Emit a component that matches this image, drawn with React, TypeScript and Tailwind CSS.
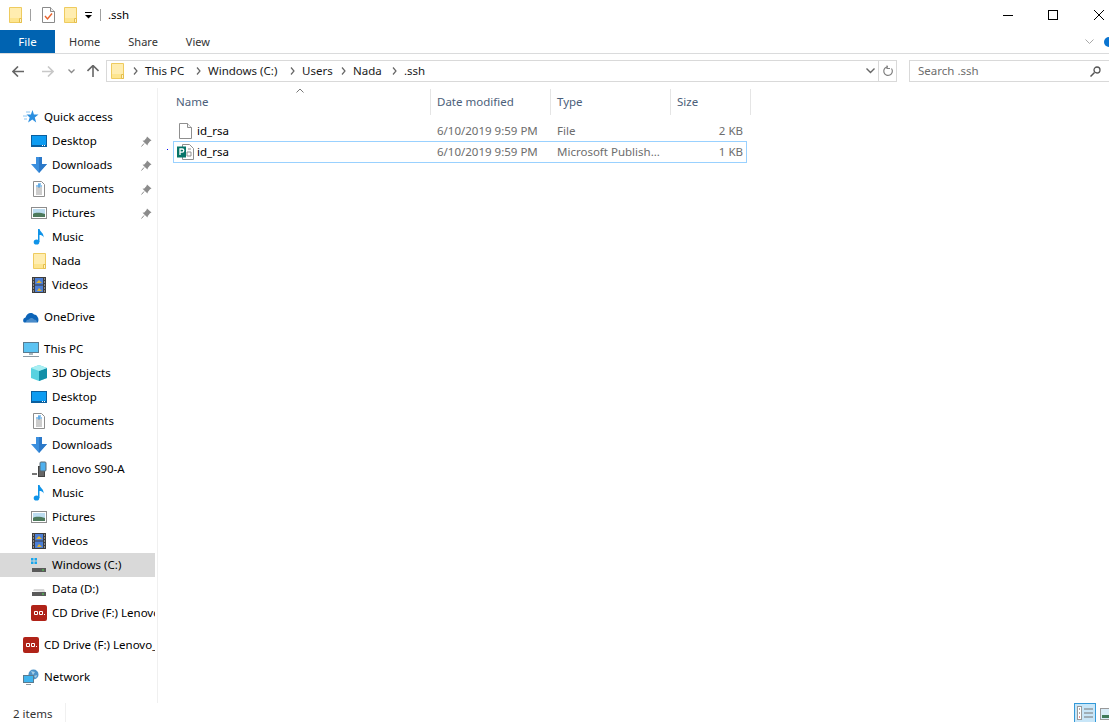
import React from "react";

function FolderIcon({ className = "w-[13px] h-4" }: { className?: string }) {
  return (
    <svg viewBox="0 0 13 16" className={className}>
      <path d="M.5.5h12v15H.5z" fill="#fde58f" stroke="#eecb5f" />
      <path d="M1 1h11v10H1z" fill="#ffedb0" />
      <path d="M10.500 11.500h2v4h-2z" fill="#fff3c8" stroke="#e5bf4d" />
    </svg>
  );
}

function PropertiesIcon() {
  return (
    <svg viewBox="0 0 13 16" className="w-[13px] h-4">
      <path d="M.5.5h8l4 4v11H.5z" fill="#fff" stroke="#8a8a8a" />
      <path d="M8.500.5v4h4" fill="#eee" stroke="#8a8a8a" />
      <path d="M3 9l2.500 3L10 6.500" fill="none" stroke="#e8622c" strokeWidth="1.400" />
    </svg>
  );
}

function QuickIcon() {
  return (
    <svg viewBox="0 0 16 16" className="w-4 h-4">
      <path d="M9.500 1l1.400 4.500H15.500l-3.700 2.900 1.400 5-3.900-3-4.200 3 1.600-5L3.500 5.500h4.400z" fill="#2b8fe0" />
      <path d="M0 7h4M1 10h3M3 3h4" stroke="#8cc6f2" strokeWidth="1" />
    </svg>
  );
}

function DesktopIcon() {
  return (
    <svg viewBox="0 0 16 12" className="w-4 h-3">
      <rect x=".5" y=".5" width="15" height="11" fill="#0d9cf2" stroke="#0a5f9f" />
      <path d="M1 10.500h14" stroke="#0a5f9f" />
      <path d="M11 10.500h1M13 10.500h1" stroke="#fff" />
    </svg>
  );
}

function DownloadIcon() {
  return (
    <svg viewBox="0 0 16 16" className="w-4 h-4">
      <path d="M5 0h6v7h5l-8 9-8-9h5z" fill="#3b8fde" />
      <path d="M8 0h3v7h5l-8 9z" fill="#2b78c8" />
    </svg>
  );
}

function DocumentIcon() {
  return (
    <svg viewBox="0 0 12 16" className="w-3 h-4">
      <path d="M.5.5h8l3 3v12H.5z" fill="#fff" stroke="#8d8d8d" />
      <path d="M5 3h3M3 5h6M6 3v4" stroke="#2f8fdc" />
      <path d="M3 7h6M3 9h6M3 11h6M3 13h6" stroke="#9a9a9a" />
    </svg>
  );
}

function PicturesIcon() {
  return (
    <svg viewBox="0 0 16 12" className="w-4 h-3">
      <rect x=".5" y=".5" width="15" height="11" fill="#fff" stroke="#8d8d8d" />
      <rect x="2" y="2" width="12" height="8" fill="#bcdcf0" />
      <path d="M2 7c3-2 8-1 12 0v3H2z" fill="#4d7a5c" />
    </svg>
  );
}

function MusicIcon() {
  return (
    <svg viewBox="0 0 12 16" className="w-3 h-4">
      <ellipse cx="3.500" cy="13" rx="2.800" ry="2.600" fill="#0f93e8" />
      <path d="M5 13V0h1.600c.4 3 4.400 4 4 8.500C10 6.500 8 6 6.500 6v7z" fill="#0f93e8" />
    </svg>
  );
}

function VideosIcon() {
  return (
    <svg viewBox="0 0 14 16" className="w-[14px] h-4">
      <rect width="14" height="16" fill="#3d3d3d" />
      <rect x="3" y="1" width="8" height="6.500" fill="#4c7fd6" />
      <rect x="3" y="8.500" width="8" height="6.500" fill="#4c7fd6" />
      <path d="M4 6l3-3 3 3zM5 14l2-3 3 3z" fill="#e0b030" />
      <path d="M1 2h1M1 5h1M1 8h1M1 11h1M1 14h1M12 2h1M12 5h1M12 8h1M12 11h1M12 14h1" stroke="#ddd" />
    </svg>
  );
}

function CloudIcon() {
  return (
    <svg viewBox="0 0 16 11" className="w-4 h-[11px]">
      <path d="M1 10.500C-.5 9 0 6 2.500 5.500 3.500 1.500 8-.5 11 2.500 13 2.500 14 3.500 14.500 5c1 .5 1.500 4.500 0 5.500z" fill="#0c64b8" />
      <path d="M3 10.500c0-2 1-3 3-3 1-2 4-2 5 0 2 0 3 1 3 3z" fill="#fff" opacity=".25" />
    </svg>
  );
}

function PcIcon() {
  return (
    <svg viewBox="0 0 16 15" className="w-4 h-[15px]">
      <rect x=".5" y=".5" width="15" height="10" fill="#5cc3f2" stroke="#5a7b8f" />
      <path d="M6 11h4v2H6z" fill="#a9b6bd" />
      <path d="M0 14.500h16" stroke="#8c9aa3" />
    </svg>
  );
}

function ObjectsIcon() {
  return (
    <svg viewBox="0 0 16 16" className="w-4 h-4">
      <path d="M8 0l8 3v10l-8 3-8-3V3z" fill="#58d2e0" />
      <path d="M8 6l8-3v10l-8 3z" fill="#128fa8" />
      <path d="M8 6L0 3l8-3 8 3z" fill="#a8eef2" />
    </svg>
  );
}

function PhoneIcon() {
  return (
    <svg viewBox="0 0 16 16" className="w-4 h-4">
      <rect x="7.500" y="5.500" width="6" height="10" fill="#666" stroke="#444" />
      <rect x="9" y="1" width="6" height="9" rx="1" fill="#4eb0ee" stroke="#5a6a75" />
      <path d="M1 12h5v2H1z" fill="#777" />
    </svg>
  );
}

function DriveIcon({ windows }: { windows?: boolean }) {
  return (
    <svg viewBox="0 0 16 16" className="w-4 h-4">
      {windows && <path d="M0 1h2.500v2.500H0zM3.500 1H6v2.500H3.500zM0 4.500h2.500V7H0zM3.500 4.500H6V7H3.500z" fill="#18a6ec" />}
      <path d="M2 10l1-2h10l1 3z" fill="#d8d8d8" />
      <rect x="1" y="11" width="14" height="4" fill="#5a5a5a" />
      <rect x="11" y="12.500" width="2" height="1" fill="#4fe04f" />
    </svg>
  );
}

function CdIcon() {
  return (
    <svg viewBox="0 0 16 16" className="w-4 h-4">
      <rect width="16" height="16" rx="2" fill="#b02318" />
      <path d="M3.500 6.500h3v3h-3zM8.500 6.500h3v3h-3z" fill="none" stroke="#fff" />
      <rect x="13" y="9" width="1" height="1" fill="#fff" />
    </svg>
  );
}

function NetworkIcon() {
  return (
    <svg viewBox="0 0 16 16" className="w-4 h-4">
      <circle cx="10.500" cy="5.500" r="5" fill="#4d93c9" />
      <path d="M8 2l4 1-2 3zM11 7l3-1-1 3z" fill="#a7d0e8" />
      <rect x=".5" y="6.500" width="10" height="7" fill="#40b4ee" stroke="#5a7b8f" />
      <path d="M3 15.500h5" stroke="#8c9aa3" />
    </svg>
  );
}

function PinIcon() {
  return (
    <svg viewBox="0 0 11 11" className="w-[11px] h-[11px]">
      <path d="M6 .5l4.500 4-1.500.8-2.200 2.600L6.500 9.500 1.500 4.800l1.800-.4L5.500 2z" fill="#8b8b8b" />
      <path d="M3 7.500L.5 10.500" stroke="#8b8b8b" />
    </svg>
  );
}

function BlankFileIcon() {
  return (
    <svg viewBox="0 0 13 16" className="w-[13px] h-4">
      <path d="M.5.5h8l4 4v11H.5z" fill="#fff" stroke="#8f8f8f" />
      <path d="M8.500.5v4h4" fill="#f3f3f3" stroke="#8f8f8f" />
    </svg>
  );
}

function PublisherIcon() {
  return (
    <svg viewBox="0 0 17 16" className="w-[17px] h-4">
      <path d="M5.500.5h7l4 4v11h-11z" fill="#fff" stroke="#8f8f8f" />
      <path d="M10 8h4v4h-4zM11 5h3" fill="none" stroke="#8f8f8f" />
      <rect y="2.500" width="9" height="11" fill="#077568" />
      <path d="M3 11V5h2.200a1.500 1.500 0 010 3.200H3" fill="none" stroke="#fff" strokeWidth="1.300" />
    </svg>
  );
}

function Chevron() {
  return (
    <svg viewBox="0 0 5 8" className="w-[5px] h-2 shrink-0">
      <path d="M1 .5L4 4 1 7.500" fill="none" stroke="#666" strokeWidth="1.200" />
    </svg>
  );
}

type NavItem = { icon: React.ReactNode; label: string; pinned?: boolean; selected?: boolean; top?: boolean };

const quickAccess: NavItem[] = [
  { icon: <QuickIcon />, label: "Quick access", top: true },
  { icon: <DesktopIcon />, label: "Desktop", pinned: true },
  { icon: <DownloadIcon />, label: "Downloads", pinned: true },
  { icon: <DocumentIcon />, label: "Documents", pinned: true },
  { icon: <PicturesIcon />, label: "Pictures", pinned: true },
  { icon: <MusicIcon />, label: "Music" },
  { icon: <FolderIcon />, label: "Nada" },
  { icon: <VideosIcon />, label: "Videos" },
];

const thisPc: NavItem[] = [
  { icon: <PcIcon />, label: "This PC", top: true },
  { icon: <ObjectsIcon />, label: "3D Objects" },
  { icon: <DesktopIcon />, label: "Desktop" },
  { icon: <DocumentIcon />, label: "Documents" },
  { icon: <DownloadIcon />, label: "Downloads" },
  { icon: <PhoneIcon />, label: "Lenovo S90-A" },
  { icon: <MusicIcon />, label: "Music" },
  { icon: <PicturesIcon />, label: "Pictures" },
  { icon: <VideosIcon />, label: "Videos" },
  { icon: <DriveIcon windows />, label: "Windows (C:)", selected: true },
  { icon: <DriveIcon />, label: "Data (D:)" },
  { icon: <CdIcon />, label: "CD Drive (F:) Lenovo_Suite" },
];

function NavRow({ item }: { item: NavItem }) {
  return (
    <div className={`flex items-center h-6 w-[155px] overflow-hidden ${item.top ? "pl-[23px]" : "pl-[31px]"} ${item.selected ? "bg-[#d9d9d9]" : ""}`}>
      <div className="w-4 h-4 flex items-center justify-center shrink-0">{item.icon}</div>
      <span className="ml-[5px] whitespace-nowrap">{item.label}</span>
      {item.pinned && (
        <span className="ml-auto mr-[3px] shrink-0 flex">
          <PinIcon />
        </span>
      )}
    </div>
  );
}

const crumbs = [
  { label: "This PC", width: "w-[63px]" },
  { label: "Windows (C:)", width: "w-[94px]" },
  { label: "Users", width: "w-[51px]" },
  { label: "Nada", width: "w-[51px]" },
  { label: ".ssh", width: "w-[40px]" },
];

const files = [
  { icon: <BlankFileIcon />, name: "id_rsa", date: "6/10/2019 9:59 PM", type: "File", size: "2 KB", focused: false },
  { icon: <PublisherIcon />, name: "id_rsa", date: "6/10/2019 9:59 PM", type: "Microsoft Publish...", size: "1 KB", focused: true },
];

export default function App() {
  return (
    <div className="w-[1109px] h-[722px] bg-white text-black overflow-hidden flex flex-col text-[11.5px] font-['Noto_Sans',sans-serif]">
      {/* title bar */}
      <div className="h-[30px] flex items-center shrink-0">
        <div className="ml-[9px] flex"><FolderIcon /></div>
        <div className="ml-[8px] w-px h-3 bg-[#a0a0a0]" />
        <div className="ml-[11px] flex"><PropertiesIcon /></div>
        <div className="ml-[9px] flex"><FolderIcon /></div>
        <svg viewBox="0 0 7 7" className="ml-[8px] w-[7px] h-[7px]">
          <path d="M0 .5h7" stroke="#000" />
          <path d="M0 3h7L3.500 6.500z" fill="#000" />
        </svg>
        <div className="ml-[8px] w-px h-3 bg-[#a0a0a0]" />
        <span className="ml-[7px]">.ssh</span>
        <div className="ml-auto flex items-center">
          <svg viewBox="0 0 10 10" className="w-[10px] h-[10px]"><path d="M0 5.500h10" stroke="#000" /></svg>
          <svg viewBox="0 0 10 10" className="ml-[35px] w-[10px] h-[10px]"><rect x=".5" y=".5" width="9" height="9" fill="none" stroke="#000" /></svg>
          <svg viewBox="0 0 10 10" className="ml-[36px] mr-[5px] w-[10px] h-[10px]"><path d="M0 0l10 10M10 0L0 10" stroke="#000" /></svg>
        </div>
      </div>

      {/* ribbon tabs */}
      <div className="h-6 flex shrink-0 border-b border-[#dadbdc] items-stretch">
        <div className="w-[55px] bg-[#0063b1] text-white flex items-center justify-center">File</div>
        <div className="flex items-center text-[#333] text-[11px] pt-[2px]">
          <span className="ml-[14px]">Home</span>
          <span className="ml-[28px]">Share</span>
          <span className="ml-[28px]">View</span>
        </div>
        <div className="ml-auto flex items-center">
          <svg viewBox="0 0 9 5" className="w-[9px] h-[5px]"><path d="M.5.500L4.500 4.500 8.500.5" fill="none" stroke="#a8a8a8" /></svg>
          <div className="ml-[10px] -mr-[5px] w-[10px] h-[10px] rounded-full bg-[#0a74d0]" />
        </div>
      </div>

      {/* address row */}
      <div className="h-[34px] shrink-0 flex items-center">
        <svg viewBox="0 0 12 11" className="ml-[12px] w-3 h-[11px]"><path d="M6 .5L1 5.500l5 5M1 5.500h11" fill="none" stroke="#666" strokeWidth="1.600" /></svg>
        <svg viewBox="0 0 12 11" className="ml-[18px] w-3 h-[11px]"><path d="M6 .5l5 5-5 5M11 5.500H0" fill="none" stroke="#c8c8c8" strokeWidth="1.600" /></svg>
        <svg viewBox="0 0 7 5" className="ml-[14px] w-[7px] h-[5px]"><path d="M.5.500l3 3 3-3" fill="none" stroke="#8a8a8a" strokeWidth="1.300" /></svg>
        <svg viewBox="0 0 12 12" className="ml-[12px] w-3 h-3"><path d="M.5 6l5.500-5.500L11.500 6M6 .5V12" fill="none" stroke="#666" strokeWidth="1.600" /></svg>
        <div className="ml-[7px] w-[791px] h-[22px] border border-[#d9d9d9] flex items-center text-[#1a1a1a]">
          <div className="ml-[4px] mr-[9px] flex"><FolderIcon /></div>
          {crumbs.map((c) => (
            <div key={c.label} className={`flex items-center ${c.width}`}>
              <Chevron />
              <span className="ml-[7px]">{c.label}</span>
            </div>
          ))}
          <svg viewBox="0 0 9 6" className="ml-auto w-[9px] h-[6px]"><path d="M.5.500l4 4 4-4" fill="none" stroke="#666" strokeWidth="1.400" /></svg>
          <div className="ml-[3px] h-full w-px bg-[#d9d9d9]" />
          <svg viewBox="0 0 12 12" className="ml-[3px] mr-[2px] w-3 h-3">
            <path d="M9.500 3.500a4.300 4.300 0 11-3.500-1.700M5 .500v3h3" fill="none" stroke="#808080" strokeWidth="1.200" />
          </svg>
        </div>
        <div className="ml-[12px] h-[22px] flex-1 -mr-[6px] border border-[#d9d9d9] flex items-center text-[#6d6d6d]">
          <span className="ml-[8px]">Search .ssh</span>
          <svg viewBox="0 0 11 11" className="ml-auto mr-[13px] w-[11px] h-[11px]">
            <circle cx="7" cy="4" r="3" fill="none" stroke="#555" strokeWidth="1.300" />
            <path d="M4.500 6.500L.5 10.500" stroke="#555" strokeWidth="1.500" />
          </svg>
        </div>
      </div>

      {/* body */}
      <div className="flex-1 min-h-0 flex">
        <nav className="w-[158px] shrink-0 pt-[17px] border-r border-[#f0f0f0] flex flex-col gap-2">
          <div>{quickAccess.map((item) => <NavRow key={item.label} item={item} />)}</div>
          <NavRow item={{ icon: <CloudIcon />, label: "OneDrive", top: true }} />
          <div>{thisPc.map((item) => <NavRow key={item.label} item={item} />)}</div>
          <NavRow item={{ icon: <CdIcon />, label: "CD Drive (F:) Lenovo_Suite", top: true }} />
          <NavRow item={{ icon: <NetworkIcon />, label: "Network", top: true }} />
        </nav>

        <main className="relative flex-1 min-w-0">
          <div className="flex h-[26px] mt-px text-[#4c607a]">
            <div className="relative w-[273px] pl-[18px] flex items-center border-r border-[#e5e5e5]">
              Name
              <svg viewBox="0 0 8 5" className="absolute left-[138px] -top-px w-2 h-[5px]"><path d="M.5 4.500L4 1l3.500 3.500" fill="none" stroke="#777" /></svg>
            </div>
            <div className="w-[120px] pl-[6px] flex items-center border-r border-[#e5e5e5]">Date modified</div>
            <div className="w-[120px] pl-[6px] flex items-center border-r border-[#e5e5e5]">Type</div>
            <div className="w-[80px] pl-[6px] flex items-center border-r border-[#e5e5e5]">Size</div>
          </div>
          <div className="mt-[4px] ml-[15px] w-[574px] text-[#6d6d6d]">
            {files.map((f) => (
              <div key={f.size} className={`relative flex items-center h-[22px] border ${f.focused ? "border-[#99d1ff]" : "border-transparent pt-[2px]"}`}>
                {f.focused && <div className="absolute -left-[7px] top-[7px] w-px h-px bg-[#0000ff]" />}
                <div className="ml-[3px] w-[17px] h-4 flex items-center justify-center">{f.icon}</div>
                <span className="ml-[3px] w-[240px] text-black">{f.name}</span>
                <span className="w-[120px]">{f.date}</span>
                <span className="w-[118px]">{f.type}</span>
                <span className="w-[68px] text-right">{f.size}</span>
              </div>
            ))}
          </div>
        </main>
      </div>

      {/* status bar */}
      <div className="h-[19px] shrink-0 flex items-center text-[#333]">
        <span className="ml-[13px] pt-[3px]">2 items</span>
        <div className="ml-[13px] w-px h-full bg-[#f0f0f0]" />
        <div className="ml-auto flex items-center h-full">
          <div className="w-[22px] h-full border border-b-0 border-[#3399d8] bg-[#c8e6f8] flex items-center justify-center">
            <svg viewBox="0 0 16 14" className="w-4 h-[14px]">
              <rect x=".5" y=".5" width="4" height="13" fill="#fff" stroke="#999" />
              <path d="M7 3h9M7 7h9M7 11h9" stroke="#777" />
              <path d="M2 3h1M2 7h1" stroke="#555" />
              <path d="M2 11h1" stroke="#d02020" />
            </svg>
          </div>
          <svg viewBox="0 0 9 12" className="ml-[4px] w-[9px] h-3 mt-[3px]">
            <rect x=".5" y=".5" width="12" height="11" fill="#d8ecf8" stroke="#999" />
            <path d="M2 7h9v3H2z" fill="#3f7a5a" />
          </svg>
        </div>
      </div>
    </div>
  );
}
